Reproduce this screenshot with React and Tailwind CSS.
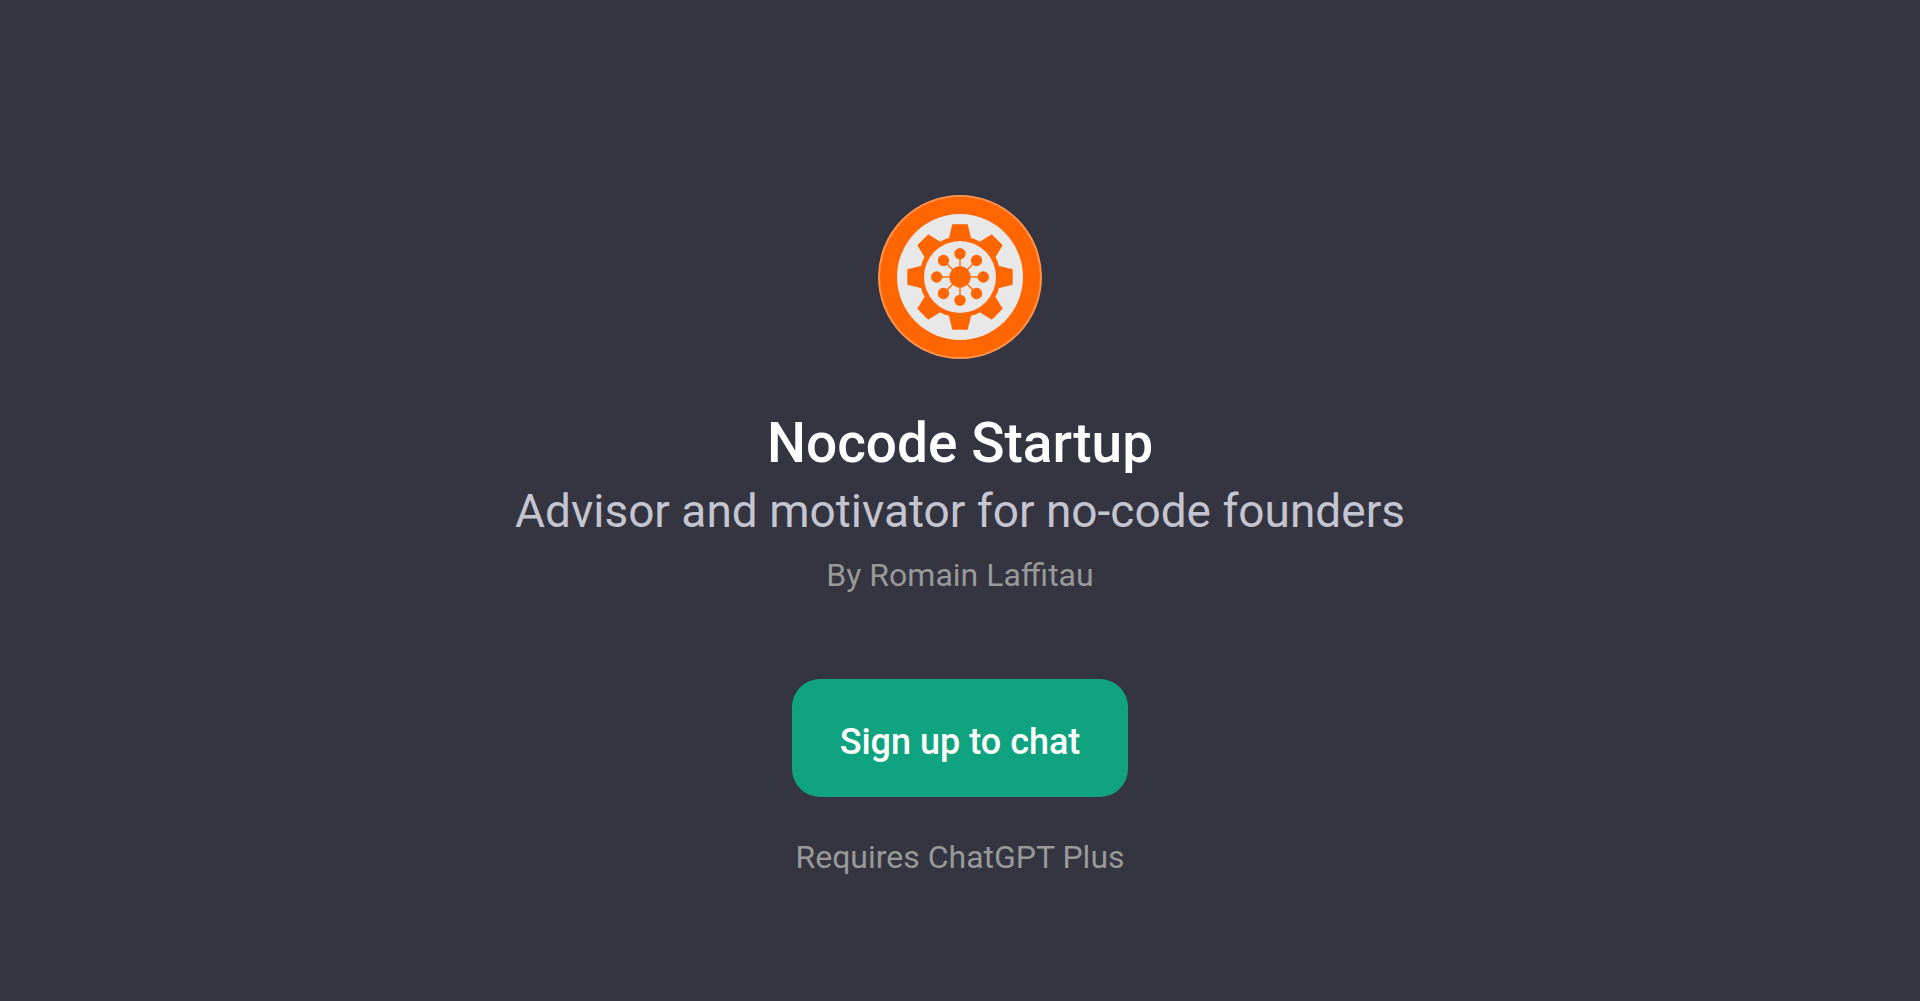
const angles = [0, 45, 90, 135, 180, 225, 270, 315];

function Logo() {
  return (
    <svg viewBox="-246 -246 492 492" className="size-41" role="img" aria-label="Nocode Startup">
      <circle r="243" fill="#ff6600" stroke="#ff934d" strokeWidth="6" />
      <circle r="189" fill="#e8e8e8" />
      <circle r="122" fill="#ff6600" />
      {angles.map((angle) => (
        <polygon
          key={angle}
          points="0,0 -33,-118 -23,-158 23,-158 33,-118"
          transform={`rotate(${angle})`}
          fill="#ff6600"
        />
      ))}
      <circle r="108" fill="#e8e8e8" />
      {angles.map((angle) => (
        <g key={angle} transform={`rotate(${angle})`}>
          <line y2="-70" stroke="#ff6600" strokeWidth="4" />
          <circle cy="-70" r="17" fill="#ff6600" />
        </g>
      ))}
      <circle r="32" fill="#ff6600" />
    </svg>
  );
}

export default function App() {
  return (
    <main className="flex min-h-screen flex-col items-center bg-[#343541] px-6 pt-[195px] pb-24 text-center font-['Roboto',sans-serif]">
      <Logo />
      <h1 className="mt-12 text-[55px] leading-[72px] font-medium text-white">Nocode Startup</h1>
      <p className="text-[46px] leading-[64px] text-[#c5c5d2]">Advisor and motivator for no-code founders</p>
      <p className="mt-3 text-[32px] leading-10 text-[#999999]">By Romain Laffitau</p>
      <button type="button" className="mt-[84px] rounded-[28px] bg-[#10a37f] px-12 pt-10 pb-8 text-[36px] leading-[46px] font-medium text-white">
        Sign up to chat
      </button>
      <p className="mt-10 text-[32px] leading-10 text-[#999999]">Requires ChatGPT Plus</p>
    </main>
  );
}
